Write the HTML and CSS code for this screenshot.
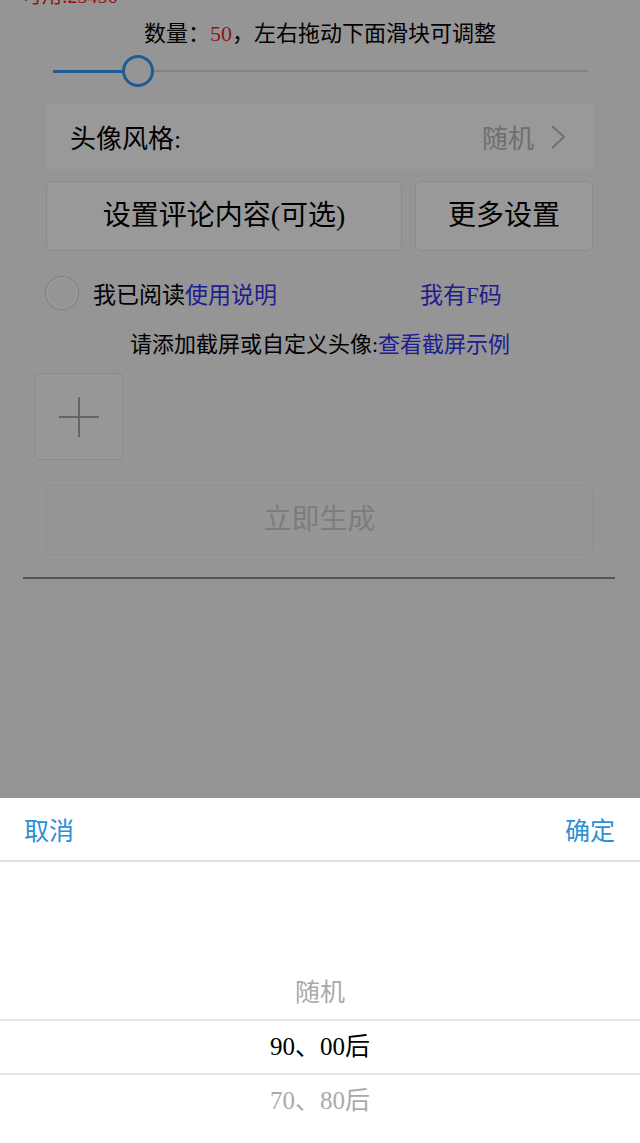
FILE: index.html
```html
<!DOCTYPE html>
<html lang="zh-CN">
<head>
    <meta charset="UTF-8">
    <title>生成头像</title>
    <link rel="stylesheet" href="styles.css">
</head>
<body>
    <div id="wrap">
        <p class="remain">可用:23456</p>
        <p class="count">数量：<span class="num">50</span>，左右拖动下面滑块可调整</p>
        <div class="slider">
            <span class="fill"></span>
            <span class="knob"></span>
            <span class="rest"></span>
        </div>
        <div class="style-row">
            <span>头像风格:</span>
            <span class="val">随机
                <svg width="16" height="26" viewBox="0 0 16 26"><polyline points="2,2 14,13 2,24" fill="none" stroke="#bbb" stroke-width="2"/></svg>
            </span>
        </div>
        <div class="btns">
            <div class="btn wide">设置评论内容(可选)</div>
            <div class="btn">更多设置</div>
        </div>
        <div class="agree">
            <span class="radio"></span>
            <span class="read">我已阅读<a href="#">使用说明</a></span>
            <a href="#" class="fcode">我有F码</a>
        </div>
        <p class="hint">请添加截屏或自定义头像:<a href="#">查看截屏示例</a></p>
        <div class="add"><span class="plus"></span></div>
        <div class="make">立即生成</div>
        <div class="rule"></div>
    </div>
    <div class="mask"></div>
    <div class="sheet">
        <div class="bar">
            <span>取消</span>
            <span>确定</span>
        </div>
        <ul class="wheel">
            <li>随机</li>
            <li class="sel">90、00后</li>
            <li>70、80后</li>
        </ul>
    </div>
</body>
</html>
```

FILE: styles.css
```css
*{margin:0;padding:0;}
html,body{width:100%;height:100%;overflow:hidden;}
body{background:#f8f8fa;font-family:"Liberation Serif","Noto Sans CJK SC",serif;color:#000;}
a{text-decoration:none;color:#3333f0;}
ul{list-style:none;}

#wrap{padding-top:1px;}
.remain{margin:-15px 0 0 22px;font-size:20px;line-height:20px;color:#ff2020;}
.count{margin-top:14px;text-align:center;font-size:22px;line-height:28px;}
.count .num{color:#f02a2a;}

.slider{display:flex;align-items:center;height:32px;margin:7px 52px 0 53px;}
.fill{width:69px;height:3px;background:#349af2;}
.knob{width:26px;height:26px;border:3px solid #349af2;border-radius:50%;background:#f8f8fa;}
.rest{flex:1;height:2px;background:#d8d8dc;}

.style-row{
    display:flex;
    justify-content:space-between;
    align-items:center;
    height:67px;
    margin:16px 47px 0 46px;
    padding:0 27px 0 24px;
    background:#fff;
    font-size:26px;
}
.style-row .val{display:flex;align-items:center;gap:16px;color:#b8b8b8;}

.btns{display:flex;gap:13px;margin:11px 47px 0 46px;}
.btn{
    width:176px;
    height:68px;
    line-height:68px;
    text-align:center;
    font-size:28px;
    background:#fff;
    border:1px solid #e8e8e8;
    border-radius:6px;
}
.btn.wide{width:354px;}

.agree{display:flex;align-items:center;height:32px;margin:26px 0 0 46px;font-size:23px;}
.radio{width:28px;height:28px;border:2px solid #fff;border-radius:50%;box-shadow:0 0 0 1px #d4d4d4;}
.read{margin-left:15px;}
.fcode{margin-left:143px;}

.hint{margin-top:22px;text-align:center;font-size:22px;line-height:28px;}

.add{
    display:flex;
    align-items:center;
    justify-content:center;
    width:84px;
    height:83px;
    margin:15px 0 0 36px;
    background:#fcfcfc;
    border:1px solid #fff;
    border-radius:4px;
    box-shadow:0 0 0 1px #e4e4e4;
}
.plus{position:relative;width:40px;height:40px;}
.plus:before,.plus:after{content:"";position:absolute;background:#a8a8a8;}
.plus:before{left:0;top:19px;width:40px;height:2px;}
.plus:after{left:19px;top:0;width:2px;height:40px;}

.make{
    height:68px;
    margin:26px 47px 0 46px;
    line-height:68px;
    text-align:center;
    font-size:28px;
    color:#d0d0d0;
    background:#fafafa;
    border:1px solid #ededed;
    border-radius:6px;
}
.rule{height:2px;margin:22px 25px 0 23px;background:#8e8e8e;}

.mask{position:fixed;left:0;top:0;right:0;bottom:0;background:rgba(0,0,0,0.4);}

.sheet{position:fixed;left:0;right:0;bottom:0;height:345px;background:#fff;}
.bar{
    display:flex;
    justify-content:space-between;
    align-items:center;
    height:62px;
    padding:0 25px 0 24px;
    border-bottom:2px solid #e2e2e2;
    font-size:25px;
    color:#2d8fd5;
}
.wheel{padding-top:105px;font-size:25px;text-align:center;color:#aaa;}
.wheel li{height:52px;line-height:52px;}
.wheel .sel{color:#000;border-top:2px solid #e6e6e6;border-bottom:2px solid #e6e6e6;}
```
